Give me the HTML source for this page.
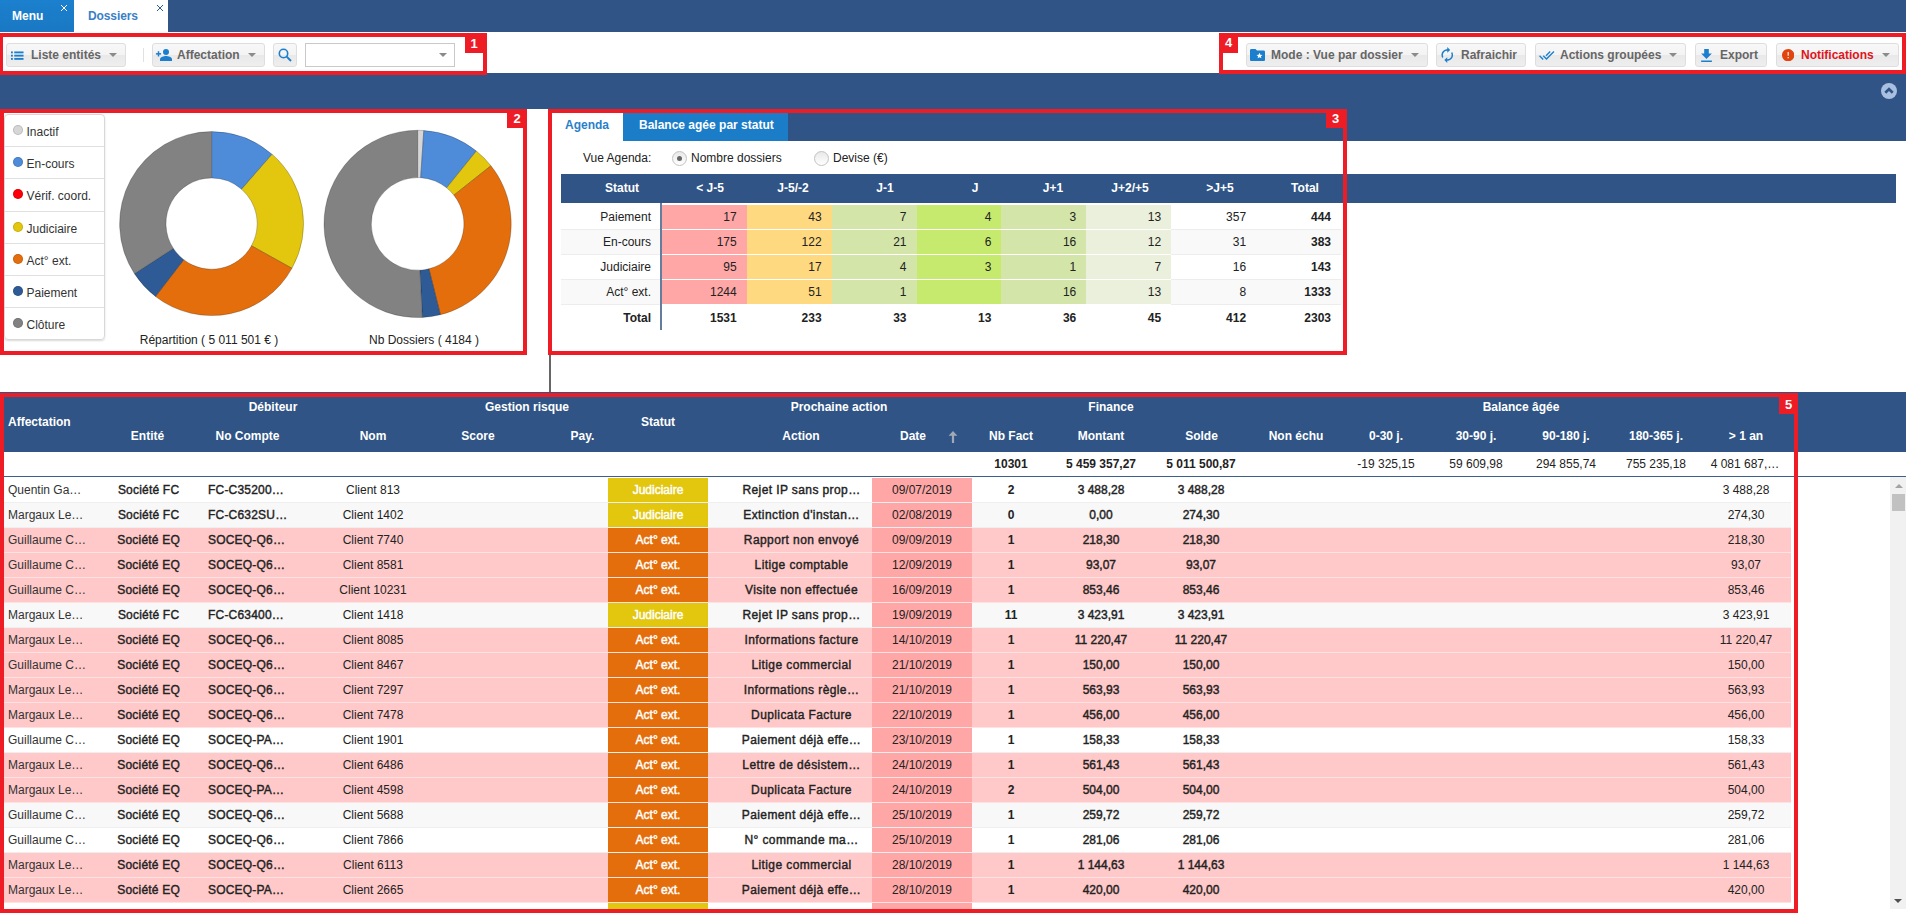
<!DOCTYPE html><html lang="fr"><head><meta charset="utf-8"><title>Dossiers</title><style>

html,body{margin:0;padding:0;}
body{width:1906px;height:913px;overflow:hidden;background:#fff;position:relative;
 font-family:"Liberation Sans",sans-serif;font-size:12px;color:#222;}
.a{position:absolute;}
.t{position:absolute;white-space:nowrap;line-height:14px;height:14px;}
.c{text-align:center;}
.r{text-align:right;}
.b{font-weight:bold;}
.m{-webkit-text-stroke:.4px currentColor;letter-spacing:.2px;}
.mn{-webkit-text-stroke:.42px currentColor;}
.ma{letter-spacing:.4px;}
.navy{background:#2f5485;}
.btn{position:absolute;top:43px;height:22px;border:1px solid #dedede;border-radius:3px;
 background:linear-gradient(#f8f8f8 0%,#f3f3f3 50%,#e9e9e9 51%,#eeeeee 100%);}
.btn .t{top:4px;font-weight:bold;color:#666;}
.arr{position:absolute;width:0;height:0;border-left:4px solid transparent;border-right:4px solid transparent;border-top:4px solid #8a8a8a;}
.rb{position:absolute;border:4px solid #ee1c25;box-sizing:border-box;}
.rl{position:absolute;background:#ee1c25;color:#fff;font-weight:bold;font-size:13px;text-align:center;}
.hd{color:#fff;font-weight:bold;}
.leg{position:absolute;left:4px;width:100px;height:32px;border-top:1px solid #e3e3e3;}
.dot{position:absolute;left:9px;width:10px;height:10px;border-radius:5px;}
.row{position:absolute;left:4px;width:1787px;height:24px;border-bottom:1px solid #ededed;}
.row .t{top:5px;}
.st{position:absolute;left:604px;width:100px;top:0;height:24px;color:#fff;-webkit-text-stroke:.45px #fff;text-align:center;line-height:25px;}
.dt{position:absolute;left:868px;width:100px;top:0;height:24px;background:#ffa7a7;text-align:center;line-height:25px;}
.ag{position:absolute;height:24px;line-height:24px;text-align:right;box-sizing:border-box;padding-right:10px;}

</style></head><body>
<div class="a navy" style="left:0;top:0;width:1906px;height:32px"></div>
<div class="a" style="left:0;top:0;width:74px;height:32px;background:linear-gradient(#1b80ce,#1a78c3)"></div>
<div class="t b" style="left:12px;top:9px;color:#fff">Menu</div>
<div class="a" style="left:74px;top:0;width:94px;height:32px;background:#fff"></div>
<div class="t" style="left:88px;top:9px;color:#3a80c6;font-weight:bold;letter-spacing:-.1px">Dossiers</div>
<svg class="a" style="left:60px;top:4px" width="8" height="8" viewBox="0 0 8 8"><path d="M1 1L7 7M7 1L1 7" stroke="#fff" stroke-width="1" fill="none"/></svg>
<svg class="a" style="left:156px;top:4px" width="8" height="8" viewBox="0 0 8 8"><path d="M1 1L7 7M7 1L1 7" stroke="#2f5f96" stroke-width="1" fill="none"/></svg>
<div class="a" style="left:0;top:32px;width:1906px;height:41px;background:#fff"></div>
<div class="a navy" style="left:0;top:73px;width:1906px;height:36px"></div>
<div class="a navy" style="left:788px;top:109px;width:1118px;height:32px"></div>
<div class="btn" style="left:6px;width:118px">
<svg class="a" style="left:4px;top:6.500px" width="13" height="9.300" viewBox="0 0 14 10" preserveAspectRatio="none"><g fill="#1b7fce"><rect x="0" y="0.5" width="2" height="2"/><rect x="3.5" y="0.5" width="10" height="2"/><rect x="0" y="4" width="2" height="2"/><rect x="3.5" y="4" width="10" height="2"/><rect x="0" y="7.5" width="2" height="2"/><rect x="3.5" y="7.5" width="10" height="2"/></g></svg>
<div class="t" style="left:24px;color:#666">Liste entités</div>
<div class="arr" style="left:102px;top:9px"></div>
</div>
<div class="a" style="left:143px;top:48px;width:1px;height:14px;background:#e1e1e1"></div>
<div class="btn" style="left:152px;width:111px">
<svg class="a" style="left:2px;top:4px" width="17" height="14" viewBox="0 0 17 14"><g fill="#1b7fce"><rect x="0.900" y="5.100" width="5.200" height="1.500"/><rect x="2.750" y="3.250" width="1.500" height="5.200"/><circle cx="11" cy="4" r="3"/><path d="M5 13v-1.6c0-2.2 4-3.3 6-3.3s6 1.100 6 3.300V13z"/></g></svg>
<div class="t" style="left:24px;color:#666">Affectation</div>
<div class="arr" style="left:95px;top:9px"></div>
</div>
<div class="btn" style="left:273px;width:22px">
<svg class="a" style="left:4px;top:4px" width="14" height="14" viewBox="0 0 14 14"><circle cx="5.500" cy="5.500" r="4.200" fill="none" stroke="#1b7fce" stroke-width="1.600"/><path d="M8.700 8.700L13 13" stroke="#1b7fce" stroke-width="1.900" fill="none"/></svg>
</div>
<div class="a" style="left:305px;top:43px;width:148px;height:22px;border:1px solid #c9c9c9;background:#fff"></div>
<div class="arr" style="left:439px;top:53px"></div>
<div class="btn" style="left:1246px;width:180px">
<svg class="a" style="left:3px;top:5px" width="15" height="12" viewBox="0 0 15 12"><path d="M1.300 0h4.200l1.500 1.600h6.700c.7 0 1.300.6 1.300 1.300v7.800c0 .7-.6 1.300-1.300 1.300H1.300C.6 12 0 11.400 0 10.700V1.300C0 .6.600 0 1.300 0z" fill="#1b7fce"/><path d="M9.500 3.800l.9 1.900 2.100.2-1.600 1.400.5 2-1.900-1.100-1.900 1.100.5-2L6.500 5.900l2.100-.2z" fill="#fff"/></svg>
<div class="t" style="left:24px;color:#666">Mode : Vue par dossier</div>
<div class="arr" style="left:164px;top:9px"></div>
</div>
<div class="btn" style="left:1436px;width:88px">
<svg class="a" style="left:4px;top:3px" width="12.500" height="16" viewBox="4 1 16 22"><path fill="#1b7fce" d="M12 6v3l4-4-4-4v3c-4.420 0-8 3.580-8 8 0 1.570.460 3.030 1.240 4.260L6.700 14.800c-.450-.830-.700-1.790-.700-2.800 0-3.310 2.690-6 6-6zm6.760 1.740L17.300 9.200c.440.840.700 1.790.700 2.800 0 3.310-2.690 6-6 6v-3l-4 4 4 4v-3c4.420 0 8-3.580 8-8 0-1.570-.460-3.030-1.240-4.260z"/></svg>
<div class="t" style="left:24px;color:#666">Rafraichir</div>
</div>
<div class="btn" style="left:1535px;width:149px">
<svg class="a" style="left:3px;top:6.500px" width="15.500" height="9" viewBox="0.400 5.500 23.300 13.600"><path fill="#1b7fce" d="M18 7l-1.410-1.410-6.340 6.340 1.410 1.410L18 7zm4.240-1.410L11.660 16.170 7.480 12l-1.410 1.410L11.660 19l12-12-1.420-1.410zM.410 13.410L6 19l1.410-1.410L1.830 12 .410 13.410z"/></svg>
<div class="t" style="left:24px;color:#666">Actions groupées</div>
<div class="arr" style="left:133px;top:9px"></div>
</div>
<div class="btn" style="left:1695px;width:70px">
<svg class="a" style="left:5px;top:4.500px" width="11" height="13" viewBox="5 3 14 17"><path fill="#1b7fce" d="M19 9h-4V3H9v6H5l7 7 7-7zM5 18v2h14v-2H5z"/></svg>
<div class="t" style="left:24px;color:#666">Export</div>
</div>
<div class="btn" style="left:1776px;width:121px">
<svg class="a" style="left:5px;top:5px" width="12.400" height="12.400" viewBox="2 2 20 20"><path fill="#e2440e" d="M12 2C6.480 2 2 6.480 2 12s4.480 10 10 10 10-4.480 10-10S17.520 2 12 2zm1 15h-2v-2h2v2zm0-4h-2V7h2v6z"/></svg>
<div class="t" style="left:24px;color:#e0141c">Notifications</div>
<div class="arr" style="left:105px;top:9px"></div>
</div>
<svg class="a" style="left:1881px;top:83px" width="16" height="16" viewBox="0 0 16 16"><circle cx="8" cy="8" r="8" fill="#a9c0e2"/><path d="M4.300 9.800L8 6.100l3.700 3.700" fill="none" stroke="#2f5485" stroke-width="2.700"/></svg>
<div class="a" style="left:4px;top:114px;width:101px;height:226px;border:1px solid #d8d8d8;border-radius:4px;box-shadow:0 1px 2px rgba(0,0,0,.15);box-sizing:border-box"></div>
<div class="a" style="left:13px;top:125.0px;width:10px;height:10px;border-radius:5px;background:#d6d6d6;box-shadow:inset 0 0 0 1px rgba(0,0,0,.12)"></div>
<div class="t" style="left:26.500px;top:125.0px;color:#333">Inactif</div>
<div class="a" style="left:5px;top:146.2px;width:99px;height:1px;background:#e0e0e0"></div>
<div class="a" style="left:13px;top:157.2px;width:10px;height:10px;border-radius:5px;background:#4e8bd9;box-shadow:inset 0 0 0 1px rgba(0,0,0,.12)"></div>
<div class="t" style="left:26.500px;top:157.2px;color:#333">En-cours</div>
<div class="a" style="left:5px;top:178.4px;width:99px;height:1px;background:#e0e0e0"></div>
<div class="a" style="left:13px;top:189.4px;width:10px;height:10px;border-radius:5px;background:#fb0007;box-shadow:inset 0 0 0 1px rgba(0,0,0,.12)"></div>
<div class="t" style="left:26.500px;top:189.4px;color:#333">Vérif. coord.</div>
<div class="a" style="left:5px;top:210.6px;width:99px;height:1px;background:#e0e0e0"></div>
<div class="a" style="left:13px;top:221.6px;width:10px;height:10px;border-radius:5px;background:#e3c60e;box-shadow:inset 0 0 0 1px rgba(0,0,0,.12)"></div>
<div class="t" style="left:26.500px;top:221.6px;color:#333">Judiciaire</div>
<div class="a" style="left:5px;top:242.8px;width:99px;height:1px;background:#e0e0e0"></div>
<div class="a" style="left:13px;top:253.8px;width:10px;height:10px;border-radius:5px;background:#e46e0b;box-shadow:inset 0 0 0 1px rgba(0,0,0,.12)"></div>
<div class="t" style="left:26.500px;top:253.8px;color:#333">Act° ext.</div>
<div class="a" style="left:5px;top:275.0px;width:99px;height:1px;background:#e0e0e0"></div>
<div class="a" style="left:13px;top:286.0px;width:10px;height:10px;border-radius:5px;background:#2e5b96;box-shadow:inset 0 0 0 1px rgba(0,0,0,.12)"></div>
<div class="t" style="left:26.500px;top:286.0px;color:#333">Paiement</div>
<div class="a" style="left:5px;top:307.2px;width:99px;height:1px;background:#e0e0e0"></div>
<div class="a" style="left:13px;top:318.2px;width:10px;height:10px;border-radius:5px;background:#828282;box-shadow:inset 0 0 0 1px rgba(0,0,0,.12)"></div>
<div class="t" style="left:26.500px;top:318.2px;color:#333">Clôture</div>
<svg class="a" style="left:0;top:0" width="530" height="360" viewBox="0 0 530 360"><path d="M211.60 131.60A92 92 0 0 1 272.08 154.27L241.58 189.24A45.6 45.6 0 0 0 211.60 178.00Z" fill="#4e8bd9" stroke="rgba(0,0,0,.28)" stroke-width="0.800"/><path d="M272.08 154.27A92 92 0 0 1 291.99 268.34L251.44 245.78A45.6 45.6 0 0 0 241.58 189.24Z" fill="#e3c60e" stroke="rgba(0,0,0,.28)" stroke-width="0.800"/><path d="M291.99 268.34A92 92 0 0 1 155.47 296.49L183.78 259.73A45.6 45.6 0 0 0 251.44 245.78Z" fill="#e46e0b" stroke="rgba(0,0,0,.28)" stroke-width="0.800"/><path d="M155.47 296.49A92 92 0 0 1 134.44 273.71L173.36 248.44A45.6 45.6 0 0 0 183.78 259.73Z" fill="#2e5b96" stroke="rgba(0,0,0,.28)" stroke-width="0.800"/><path d="M134.44 273.71A92 92 0 0 1 211.60 131.60L211.60 178.00A45.6 45.6 0 0 0 173.36 248.44Z" fill="#828282" stroke="rgba(0,0,0,.28)" stroke-width="0.800"/></svg>
<svg class="a" style="left:0;top:0" width="530" height="360" viewBox="0 0 530 360"><path d="M417.60 130.30A93.6 93.6 0 0 1 423.80 130.51L420.67 177.70A46.3 46.3 0 0 0 417.60 177.60Z" fill="#d6d6d6" stroke="rgba(0,0,0,.28)" stroke-width="0.800"/><path d="M423.80 130.51A93.6 93.6 0 0 1 476.38 151.06L446.67 187.87A46.3 46.3 0 0 0 420.67 177.70Z" fill="#4e8bd9" stroke="rgba(0,0,0,.28)" stroke-width="0.800"/><path d="M476.38 151.06A93.6 93.6 0 0 1 490.95 165.76L453.89 195.14A46.3 46.3 0 0 0 446.67 187.87Z" fill="#e3c60e" stroke="rgba(0,0,0,.28)" stroke-width="0.800"/><path d="M490.95 165.76A93.6 93.6 0 0 1 440.40 314.68L428.88 268.81A46.3 46.3 0 0 0 453.89 195.14Z" fill="#e46e0b" stroke="rgba(0,0,0,.28)" stroke-width="0.800"/><path d="M440.40 314.68A93.6 93.6 0 0 1 422.34 317.38L419.94 270.14A46.3 46.3 0 0 0 428.88 268.81Z" fill="#2e5b96" stroke="rgba(0,0,0,.28)" stroke-width="0.800"/><path d="M422.34 317.38A93.6 93.6 0 1 1 417.60 130.30L417.60 177.60A46.3 46.3 0 1 0 419.94 270.14Z" fill="#828282" stroke="rgba(0,0,0,.28)" stroke-width="0.800"/></svg>
<div class="t c" style="left:109px;width:200px;top:333px">Répartition ( 5 011 501 € )</div>
<div class="t c" style="left:324px;width:200px;top:333px">Nb Dossiers ( 4184 )</div>
<div class="a" style="left:552px;top:113px;width:71px;height:28px;background:#fff"></div>
<div class="a" style="left:623px;top:113px;width:165px;height:28px;background:#1b7cc8"></div>
<div class="t b" style="left:565px;top:118px;color:#2a7fc9">Agenda</div>
<div class="t b" style="left:639px;top:118px;color:#fff">Balance agée par statut</div>
<div class="t" style="left:583px;top:151px">Vue Agenda:</div>
<div class="a" style="left:672px;top:151px;width:13px;height:13px;border:1px solid #c2c2c2;border-radius:8px;background:linear-gradient(#e8e8e8,#fff)"></div>
<div class="a" style="left:676.5px;top:155.5px;width:5px;height:5px;border-radius:3px;background:#666"></div>
<div class="t" style="left:691px;top:151px">Nombre dossiers</div>
<div class="a" style="left:814px;top:151px;width:13px;height:13px;border:1px solid #c2c2c2;border-radius:8px;background:linear-gradient(#e8e8e8,#fff)"></div>
<div class="t" style="left:833px;top:151px">Devise (€)</div>
<div class="a navy" style="left:561px;top:174px;width:1335px;height:29px"></div>
<div class="t c hd" style="left:572px;width:100px;top:181px">Statut</div>
<div class="t c hd" style="left:660px;width:100px;top:181px">&lt; J-5</div>
<div class="t c hd" style="left:743px;width:100px;top:181px">J-5/-2</div>
<div class="t c hd" style="left:835px;width:100px;top:181px">J-1</div>
<div class="t c hd" style="left:925px;width:100px;top:181px">J</div>
<div class="t c hd" style="left:1003px;width:100px;top:181px">J+1</div>
<div class="t c hd" style="left:1080px;width:100px;top:181px">J+2/+5</div>
<div class="t c hd" style="left:1170px;width:100px;top:181px">&gt;J+5</div>
<div class="t c hd" style="left:1255px;width:100px;top:181px">Total</div>
<div class="ag" style="left:561px;width:100px;top:205px;background:#fff;border-bottom:0">Paiement</div>
<div class="ag" style="left:661.8px;width:85.900px;padding-right:11px;top:205px;background:#ffa7a7">17</div>
<div class="ag" style="left:746.7px;width:85.900px;padding-right:11px;top:205px;background:#ffd97f">43</div>
<div class="ag" style="left:831.6px;width:85.900px;padding-right:11px;top:205px;background:#d3e5a9">7</div>
<div class="ag" style="left:916.5px;width:85.900px;padding-right:11px;top:205px;background:#c6ea6e">4</div>
<div class="ag" style="left:1001.4px;width:85.900px;padding-right:11px;top:205px;background:#d3e5a9">3</div>
<div class="ag" style="left:1086.3px;width:85.900px;padding-right:11px;top:205px;background:#ebf0dc">13</div>
<div class="ag" style="left:1171.2px;width:85.900px;padding-right:11px;top:205px;background:#fff">357</div>
<div class="ag" style="left:1256.1px;width:85.900px;padding-right:11px;top:205px;background:#fff;font-weight:bold">444</div>
<div class="a" style="left:561px;top:229px;width:100px;height:1px;background:#ededed"></div>
<div class="a" style="left:1171px;top:229px;width:170px;height:1px;background:#ededed"></div>
<div class="ag" style="left:561px;width:100px;top:230px;background:#f9f9f9;border-bottom:0">En-cours</div>
<div class="ag" style="left:661.8px;width:85.900px;padding-right:11px;top:230px;background:#ffa7a7">175</div>
<div class="ag" style="left:746.7px;width:85.900px;padding-right:11px;top:230px;background:#ffd97f">122</div>
<div class="ag" style="left:831.6px;width:85.900px;padding-right:11px;top:230px;background:#d3e5a9">21</div>
<div class="ag" style="left:916.5px;width:85.900px;padding-right:11px;top:230px;background:#c6ea6e">6</div>
<div class="ag" style="left:1001.4px;width:85.900px;padding-right:11px;top:230px;background:#d3e5a9">16</div>
<div class="ag" style="left:1086.3px;width:85.900px;padding-right:11px;top:230px;background:#ebf0dc">12</div>
<div class="ag" style="left:1171.2px;width:85.900px;padding-right:11px;top:230px;background:#f9f9f9">31</div>
<div class="ag" style="left:1256.1px;width:85.900px;padding-right:11px;top:230px;background:#f9f9f9;font-weight:bold">383</div>
<div class="a" style="left:561px;top:254px;width:100px;height:1px;background:#ededed"></div>
<div class="a" style="left:1171px;top:254px;width:170px;height:1px;background:#ededed"></div>
<div class="ag" style="left:561px;width:100px;top:255px;background:#fff;border-bottom:0">Judiciaire</div>
<div class="ag" style="left:661.8px;width:85.900px;padding-right:11px;top:255px;background:#ffa7a7">95</div>
<div class="ag" style="left:746.7px;width:85.900px;padding-right:11px;top:255px;background:#ffd97f">17</div>
<div class="ag" style="left:831.6px;width:85.900px;padding-right:11px;top:255px;background:#d3e5a9">4</div>
<div class="ag" style="left:916.5px;width:85.900px;padding-right:11px;top:255px;background:#c6ea6e">3</div>
<div class="ag" style="left:1001.4px;width:85.900px;padding-right:11px;top:255px;background:#d3e5a9">1</div>
<div class="ag" style="left:1086.3px;width:85.900px;padding-right:11px;top:255px;background:#ebf0dc">7</div>
<div class="ag" style="left:1171.2px;width:85.900px;padding-right:11px;top:255px;background:#fff">16</div>
<div class="ag" style="left:1256.1px;width:85.900px;padding-right:11px;top:255px;background:#fff;font-weight:bold">143</div>
<div class="a" style="left:561px;top:279px;width:100px;height:1px;background:#ededed"></div>
<div class="a" style="left:1171px;top:279px;width:170px;height:1px;background:#ededed"></div>
<div class="ag" style="left:561px;width:100px;top:280px;background:#f9f9f9;border-bottom:0">Act° ext.</div>
<div class="ag" style="left:661.8px;width:85.900px;padding-right:11px;top:280px;background:#ffa7a7">1244</div>
<div class="ag" style="left:746.7px;width:85.900px;padding-right:11px;top:280px;background:#ffd97f">51</div>
<div class="ag" style="left:831.6px;width:85.900px;padding-right:11px;top:280px;background:#d3e5a9">1</div>
<div class="ag" style="left:916.5px;width:85.900px;padding-right:11px;top:280px;background:#c6ea6e"></div>
<div class="ag" style="left:1001.4px;width:85.900px;padding-right:11px;top:280px;background:#d3e5a9">16</div>
<div class="ag" style="left:1086.3px;width:85.900px;padding-right:11px;top:280px;background:#ebf0dc">13</div>
<div class="ag" style="left:1171.2px;width:85.900px;padding-right:11px;top:280px;background:#f9f9f9">8</div>
<div class="ag" style="left:1256.1px;width:85.900px;padding-right:11px;top:280px;background:#f9f9f9;font-weight:bold">1333</div>
<div class="a" style="left:561px;top:304px;width:100px;height:1px;background:#ededed"></div>
<div class="a" style="left:1171px;top:304px;width:170px;height:1px;background:#ededed"></div>
<div class="ag b" style="left:561px;width:100px;top:306px">Total</div>
<div class="ag b" style="left:661.8px;width:85.900px;padding-right:11px;top:306px">1531</div>
<div class="ag b" style="left:746.7px;width:85.900px;padding-right:11px;top:306px">233</div>
<div class="ag b" style="left:831.6px;width:85.900px;padding-right:11px;top:306px">33</div>
<div class="ag b" style="left:916.5px;width:85.900px;padding-right:11px;top:306px">13</div>
<div class="ag b" style="left:1001.4px;width:85.900px;padding-right:11px;top:306px">36</div>
<div class="ag b" style="left:1086.3px;width:85.900px;padding-right:11px;top:306px">45</div>
<div class="ag b" style="left:1171.2px;width:85.900px;padding-right:11px;top:306px">412</div>
<div class="ag b" style="left:1256.1px;width:85.900px;padding-right:11px;top:306px">2303</div>
<div class="a" style="left:660px;top:203px;width:2px;height:127px;background:#647c9e"></div>
<div class="a" style="left:549px;top:355px;width:2px;height:37px;background:#666"></div>
<div class="a navy" style="left:0;top:392px;width:1906px;height:60px"></div>
<div class="t hd" style="left:8px;top:415px">Affectation</div>
<div class="t c hd" style="left:213px;width:120px;top:400px">Débiteur</div>
<div class="t c hd" style="left:467px;width:120px;top:400px">Gestion risque</div>
<div class="t c hd" style="left:779px;width:120px;top:400px">Prochaine action</div>
<div class="t c hd" style="left:1051px;width:120px;top:400px">Finance</div>
<div class="t c hd" style="left:1461px;width:120px;top:400px">Balance âgée</div>
<div class="t c hd" style="left:598px;width:120px;top:415px">Statut</div>
<div class="t c hd" style="left:87.5px;width:120px;top:429px">Entité</div>
<div class="t c hd" style="left:187.5px;width:120px;top:429px">No Compte</div>
<div class="t c hd" style="left:313px;width:120px;top:429px">Nom</div>
<div class="t c hd" style="left:418px;width:120px;top:429px">Score</div>
<div class="t c hd" style="left:522.5px;width:120px;top:429px">Pay.</div>
<div class="t c hd" style="left:741px;width:120px;top:429px">Action</div>
<div class="t c hd" style="left:853px;width:120px;top:429px">Date</div>
<div class="t c hd" style="left:951px;width:120px;top:429px">Nb Fact</div>
<div class="t c hd" style="left:1041px;width:120px;top:429px">Montant</div>
<div class="t c hd" style="left:1141.5px;width:120px;top:429px">Solde</div>
<div class="t c hd" style="left:1236px;width:120px;top:429px">Non échu</div>
<div class="t c hd" style="left:1326px;width:120px;top:429px">0-30 j.</div>
<div class="t c hd" style="left:1416px;width:120px;top:429px">30-90 j.</div>
<div class="t c hd" style="left:1506px;width:120px;top:429px">90-180 j.</div>
<div class="t c hd" style="left:1596px;width:120px;top:429px">180-365 j.</div>
<div class="t c hd" style="left:1686px;width:120px;top:429px">&gt; 1 an</div>
<svg class="a" style="left:948.400px;top:430.500px" width="10" height="12" viewBox="0 0 10 12"><path d="M5 0L9.400 4.800H6.100V12H3.900V4.800H0.600z" fill="#a2a9b4"/></svg>
<div class="t c b" style="left:951.0px;width:120px;top:457px">10301</div>
<div class="t c b" style="left:1041.0px;width:120px;top:457px">5 459 357,27</div>
<div class="t c b" style="left:1141.0px;width:120px;top:457px">5 011 500,87</div>
<div class="t c " style="left:1326.0px;width:120px;top:457px">-19 325,15</div>
<div class="t c " style="left:1416.0px;width:120px;top:457px">59 609,98</div>
<div class="t c " style="left:1506.0px;width:120px;top:457px">294 855,74</div>
<div class="t c " style="left:1596.0px;width:120px;top:457px">755 235,18</div>
<div class="t c " style="left:1685.0px;width:120px;top:457px">4 081 687,…</div>
<div class="a" style="left:0;top:476px;width:1906px;height:1px;background:#3d5f8c"></div>
<div class="row" style="top:478px;background:#fff;border-bottom-color:#efefef">
<div class="t" style="left:4px;color:#333">Quentin Ga…</div>
<div class="t c m" style="left:84.6px;width:120px">Société FC</div>
<div class="t m" style="left:204px">FC-C35200…</div>
<div class="t c " style="left:309.0px;width:120px">Client 813</div>
<div class="st" style="background:#e3c60e">Judiciaire</div>
<div class="t c m ma" style="left:737.5px;width:120px">Rejet IP sans prop…</div>
<div class="dt">09/07/2019</div>
<div class="t c b" style="left:947.0px;width:120px">2</div>
<div class="t c mn" style="left:1037.0px;width:120px">3 488,28</div>
<div class="t c mn" style="left:1137.0px;width:120px">3 488,28</div>
<div class="t c " style="left:1682.0px;width:120px">3 488,28</div>
</div>
<div class="row" style="top:503px;background:#f8f8f8;border-bottom-color:#efefef">
<div class="t" style="left:4px;color:#333">Margaux Le…</div>
<div class="t c m" style="left:84.6px;width:120px">Société FC</div>
<div class="t m" style="left:204px">FC-C632SU…</div>
<div class="t c " style="left:309.0px;width:120px">Client 1402</div>
<div class="st" style="background:#e3c60e">Judiciaire</div>
<div class="t c m ma" style="left:737.5px;width:120px">Extinction d'instan…</div>
<div class="dt">02/08/2019</div>
<div class="t c b" style="left:947.0px;width:120px">0</div>
<div class="t c mn" style="left:1037.0px;width:120px">0,00</div>
<div class="t c mn" style="left:1137.0px;width:120px">274,30</div>
<div class="t c " style="left:1682.0px;width:120px">274,30</div>
</div>
<div class="row" style="top:528px;background:#ffc9c9;border-bottom-color:#ffe1e1">
<div class="t" style="left:4px;color:#333">Guillaume C…</div>
<div class="t c m" style="left:84.6px;width:120px">Société EQ</div>
<div class="t m" style="left:204px">SOCEQ-Q6…</div>
<div class="t c " style="left:309.0px;width:120px">Client 7740</div>
<div class="st" style="background:#e46e0b">Act° ext.</div>
<div class="t c m ma" style="left:737.5px;width:120px">Rapport non envoyé</div>
<div class="dt">09/09/2019</div>
<div class="t c b" style="left:947.0px;width:120px">1</div>
<div class="t c mn" style="left:1037.0px;width:120px">218,30</div>
<div class="t c mn" style="left:1137.0px;width:120px">218,30</div>
<div class="t c " style="left:1682.0px;width:120px">218,30</div>
</div>
<div class="row" style="top:553px;background:#ffc9c9;border-bottom-color:#ffe1e1">
<div class="t" style="left:4px;color:#333">Guillaume C…</div>
<div class="t c m" style="left:84.6px;width:120px">Société EQ</div>
<div class="t m" style="left:204px">SOCEQ-Q6…</div>
<div class="t c " style="left:309.0px;width:120px">Client 8581</div>
<div class="st" style="background:#e46e0b">Act° ext.</div>
<div class="t c m ma" style="left:737.5px;width:120px">Litige comptable</div>
<div class="dt">12/09/2019</div>
<div class="t c b" style="left:947.0px;width:120px">1</div>
<div class="t c mn" style="left:1037.0px;width:120px">93,07</div>
<div class="t c mn" style="left:1137.0px;width:120px">93,07</div>
<div class="t c " style="left:1682.0px;width:120px">93,07</div>
</div>
<div class="row" style="top:578px;background:#ffc9c9;border-bottom-color:#ffe1e1">
<div class="t" style="left:4px;color:#333">Guillaume C…</div>
<div class="t c m" style="left:84.6px;width:120px">Société EQ</div>
<div class="t m" style="left:204px">SOCEQ-Q6…</div>
<div class="t c " style="left:309.0px;width:120px">Client 10231</div>
<div class="st" style="background:#e46e0b">Act° ext.</div>
<div class="t c m ma" style="left:737.5px;width:120px">Visite non effectuée</div>
<div class="dt">16/09/2019</div>
<div class="t c b" style="left:947.0px;width:120px">1</div>
<div class="t c mn" style="left:1037.0px;width:120px">853,46</div>
<div class="t c mn" style="left:1137.0px;width:120px">853,46</div>
<div class="t c " style="left:1682.0px;width:120px">853,46</div>
</div>
<div class="row" style="top:603px;background:#f8f8f8;border-bottom-color:#efefef">
<div class="t" style="left:4px;color:#333">Margaux Le…</div>
<div class="t c m" style="left:84.6px;width:120px">Société FC</div>
<div class="t m" style="left:204px">FC-C63400…</div>
<div class="t c " style="left:309.0px;width:120px">Client 1418</div>
<div class="st" style="background:#e3c60e">Judiciaire</div>
<div class="t c m ma" style="left:737.5px;width:120px">Rejet IP sans prop…</div>
<div class="dt">19/09/2019</div>
<div class="t c b" style="left:947.0px;width:120px">11</div>
<div class="t c mn" style="left:1037.0px;width:120px">3 423,91</div>
<div class="t c mn" style="left:1137.0px;width:120px">3 423,91</div>
<div class="t c " style="left:1682.0px;width:120px">3 423,91</div>
</div>
<div class="row" style="top:628px;background:#ffc9c9;border-bottom-color:#ffe1e1">
<div class="t" style="left:4px;color:#333">Margaux Le…</div>
<div class="t c m" style="left:84.6px;width:120px">Société EQ</div>
<div class="t m" style="left:204px">SOCEQ-Q6…</div>
<div class="t c " style="left:309.0px;width:120px">Client 8085</div>
<div class="st" style="background:#e46e0b">Act° ext.</div>
<div class="t c m ma" style="left:737.5px;width:120px">Informations facture</div>
<div class="dt">14/10/2019</div>
<div class="t c b" style="left:947.0px;width:120px">1</div>
<div class="t c mn" style="left:1037.0px;width:120px">11 220,47</div>
<div class="t c mn" style="left:1137.0px;width:120px">11 220,47</div>
<div class="t c " style="left:1682.0px;width:120px">11 220,47</div>
</div>
<div class="row" style="top:653px;background:#ffc9c9;border-bottom-color:#ffe1e1">
<div class="t" style="left:4px;color:#333">Guillaume C…</div>
<div class="t c m" style="left:84.6px;width:120px">Société EQ</div>
<div class="t m" style="left:204px">SOCEQ-Q6…</div>
<div class="t c " style="left:309.0px;width:120px">Client 8467</div>
<div class="st" style="background:#e46e0b">Act° ext.</div>
<div class="t c m ma" style="left:737.5px;width:120px">Litige commercial</div>
<div class="dt">21/10/2019</div>
<div class="t c b" style="left:947.0px;width:120px">1</div>
<div class="t c mn" style="left:1037.0px;width:120px">150,00</div>
<div class="t c mn" style="left:1137.0px;width:120px">150,00</div>
<div class="t c " style="left:1682.0px;width:120px">150,00</div>
</div>
<div class="row" style="top:678px;background:#ffc9c9;border-bottom-color:#ffe1e1">
<div class="t" style="left:4px;color:#333">Margaux Le…</div>
<div class="t c m" style="left:84.6px;width:120px">Société EQ</div>
<div class="t m" style="left:204px">SOCEQ-Q6…</div>
<div class="t c " style="left:309.0px;width:120px">Client 7297</div>
<div class="st" style="background:#e46e0b">Act° ext.</div>
<div class="t c m ma" style="left:737.5px;width:120px">Informations règle…</div>
<div class="dt">21/10/2019</div>
<div class="t c b" style="left:947.0px;width:120px">1</div>
<div class="t c mn" style="left:1037.0px;width:120px">563,93</div>
<div class="t c mn" style="left:1137.0px;width:120px">563,93</div>
<div class="t c " style="left:1682.0px;width:120px">563,93</div>
</div>
<div class="row" style="top:703px;background:#ffc9c9;border-bottom-color:#ffe1e1">
<div class="t" style="left:4px;color:#333">Margaux Le…</div>
<div class="t c m" style="left:84.6px;width:120px">Société EQ</div>
<div class="t m" style="left:204px">SOCEQ-Q6…</div>
<div class="t c " style="left:309.0px;width:120px">Client 7478</div>
<div class="st" style="background:#e46e0b">Act° ext.</div>
<div class="t c m ma" style="left:737.5px;width:120px">Duplicata Facture</div>
<div class="dt">22/10/2019</div>
<div class="t c b" style="left:947.0px;width:120px">1</div>
<div class="t c mn" style="left:1037.0px;width:120px">456,00</div>
<div class="t c mn" style="left:1137.0px;width:120px">456,00</div>
<div class="t c " style="left:1682.0px;width:120px">456,00</div>
</div>
<div class="row" style="top:728px;background:#fff;border-bottom-color:#efefef">
<div class="t" style="left:4px;color:#333">Guillaume C…</div>
<div class="t c m" style="left:84.6px;width:120px">Société EQ</div>
<div class="t m" style="left:204px">SOCEQ-PA…</div>
<div class="t c " style="left:309.0px;width:120px">Client 1901</div>
<div class="st" style="background:#e46e0b">Act° ext.</div>
<div class="t c m ma" style="left:737.5px;width:120px">Paiement déjà effe…</div>
<div class="dt">23/10/2019</div>
<div class="t c b" style="left:947.0px;width:120px">1</div>
<div class="t c mn" style="left:1037.0px;width:120px">158,33</div>
<div class="t c mn" style="left:1137.0px;width:120px">158,33</div>
<div class="t c " style="left:1682.0px;width:120px">158,33</div>
</div>
<div class="row" style="top:753px;background:#ffc9c9;border-bottom-color:#ffe1e1">
<div class="t" style="left:4px;color:#333">Margaux Le…</div>
<div class="t c m" style="left:84.6px;width:120px">Société EQ</div>
<div class="t m" style="left:204px">SOCEQ-Q6…</div>
<div class="t c " style="left:309.0px;width:120px">Client 6486</div>
<div class="st" style="background:#e46e0b">Act° ext.</div>
<div class="t c m ma" style="left:737.5px;width:120px">Lettre de désistem…</div>
<div class="dt">24/10/2019</div>
<div class="t c b" style="left:947.0px;width:120px">1</div>
<div class="t c mn" style="left:1037.0px;width:120px">561,43</div>
<div class="t c mn" style="left:1137.0px;width:120px">561,43</div>
<div class="t c " style="left:1682.0px;width:120px">561,43</div>
</div>
<div class="row" style="top:778px;background:#ffc9c9;border-bottom-color:#ffe1e1">
<div class="t" style="left:4px;color:#333">Margaux Le…</div>
<div class="t c m" style="left:84.6px;width:120px">Société EQ</div>
<div class="t m" style="left:204px">SOCEQ-PA…</div>
<div class="t c " style="left:309.0px;width:120px">Client 4598</div>
<div class="st" style="background:#e46e0b">Act° ext.</div>
<div class="t c m ma" style="left:737.5px;width:120px">Duplicata Facture</div>
<div class="dt">24/10/2019</div>
<div class="t c b" style="left:947.0px;width:120px">2</div>
<div class="t c mn" style="left:1037.0px;width:120px">504,00</div>
<div class="t c mn" style="left:1137.0px;width:120px">504,00</div>
<div class="t c " style="left:1682.0px;width:120px">504,00</div>
</div>
<div class="row" style="top:803px;background:#f8f8f8;border-bottom-color:#efefef">
<div class="t" style="left:4px;color:#333">Guillaume C…</div>
<div class="t c m" style="left:84.6px;width:120px">Société EQ</div>
<div class="t m" style="left:204px">SOCEQ-Q6…</div>
<div class="t c " style="left:309.0px;width:120px">Client 5688</div>
<div class="st" style="background:#e46e0b">Act° ext.</div>
<div class="t c m ma" style="left:737.5px;width:120px">Paiement déjà effe…</div>
<div class="dt">25/10/2019</div>
<div class="t c b" style="left:947.0px;width:120px">1</div>
<div class="t c mn" style="left:1037.0px;width:120px">259,72</div>
<div class="t c mn" style="left:1137.0px;width:120px">259,72</div>
<div class="t c " style="left:1682.0px;width:120px">259,72</div>
</div>
<div class="row" style="top:828px;background:#fff;border-bottom-color:#efefef">
<div class="t" style="left:4px;color:#333">Guillaume C…</div>
<div class="t c m" style="left:84.6px;width:120px">Société EQ</div>
<div class="t m" style="left:204px">SOCEQ-Q6…</div>
<div class="t c " style="left:309.0px;width:120px">Client 7866</div>
<div class="st" style="background:#e46e0b">Act° ext.</div>
<div class="t c m ma" style="left:737.5px;width:120px">N° commande ma…</div>
<div class="dt">25/10/2019</div>
<div class="t c b" style="left:947.0px;width:120px">1</div>
<div class="t c mn" style="left:1037.0px;width:120px">281,06</div>
<div class="t c mn" style="left:1137.0px;width:120px">281,06</div>
<div class="t c " style="left:1682.0px;width:120px">281,06</div>
</div>
<div class="row" style="top:853px;background:#ffc9c9;border-bottom-color:#ffe1e1">
<div class="t" style="left:4px;color:#333">Margaux Le…</div>
<div class="t c m" style="left:84.6px;width:120px">Société EQ</div>
<div class="t m" style="left:204px">SOCEQ-Q6…</div>
<div class="t c " style="left:309.0px;width:120px">Client 6113</div>
<div class="st" style="background:#e46e0b">Act° ext.</div>
<div class="t c m ma" style="left:737.5px;width:120px">Litige commercial</div>
<div class="dt">28/10/2019</div>
<div class="t c b" style="left:947.0px;width:120px">1</div>
<div class="t c mn" style="left:1037.0px;width:120px">1 144,63</div>
<div class="t c mn" style="left:1137.0px;width:120px">1 144,63</div>
<div class="t c " style="left:1682.0px;width:120px">1 144,63</div>
</div>
<div class="row" style="top:878px;background:#ffc9c9;border-bottom-color:#ffe1e1">
<div class="t" style="left:4px;color:#333">Margaux Le…</div>
<div class="t c m" style="left:84.6px;width:120px">Société EQ</div>
<div class="t m" style="left:204px">SOCEQ-PA…</div>
<div class="t c " style="left:309.0px;width:120px">Client 2665</div>
<div class="st" style="background:#e46e0b">Act° ext.</div>
<div class="t c m ma" style="left:737.5px;width:120px">Paiement déjà effe…</div>
<div class="dt">28/10/2019</div>
<div class="t c b" style="left:947.0px;width:120px">1</div>
<div class="t c mn" style="left:1037.0px;width:120px">420,00</div>
<div class="t c mn" style="left:1137.0px;width:120px">420,00</div>
<div class="t c " style="left:1682.0px;width:120px">420,00</div>
</div>
<div class="row" style="top:903px;background:#fff;border-bottom-color:#efefef">
<div class="t" style="left:4px;color:#333"></div>
<div class="t c m" style="left:84.6px;width:120px"></div>
<div class="t m" style="left:204px"></div>
<div class="t c " style="left:309.0px;width:120px"></div>
<div class="st" style="background:#e3c60e">Judiciaire</div>
<div class="t c m ma" style="left:737.5px;width:120px"></div>
<div class="dt"></div>
<div class="t c b" style="left:947.0px;width:120px"></div>
<div class="t c mn" style="left:1037.0px;width:120px"></div>
<div class="t c mn" style="left:1137.0px;width:120px"></div>
<div class="t c " style="left:1682.0px;width:120px"></div>
</div>
<div class="a" style="left:1890px;top:477px;width:16px;height:432px;background:#f1f1f1"></div>
<div class="a" style="left:1892px;top:494px;width:13px;height:17px;background:#c1c1c1"></div>
<div class="a" style="left:1894.5px;top:484px;width:0;height:0;border-left:4px solid transparent;border-right:4px solid transparent;border-bottom:4px solid #a3a3a3"></div>
<div class="a" style="left:1894px;top:899px;width:0;height:0;border-left:4px solid transparent;border-right:4px solid transparent;border-top:4px solid #505050"></div>
<div class="rb" style="left:-1px;top:33px;width:488px;height:42px"></div>
<div class="rl" style="left:465px;top:33px;width:22px;height:20px;line-height:20px"><span style="position:relative;left:-2px;top:1px">1</span></div>
<div class="rb" style="left:1219px;top:33px;width:687px;height:41px"></div>
<div class="rl" style="left:1219px;top:33px;width:19px;height:20px;line-height:20px"><span style="position:relative;left:0px;top:0px">4</span></div>
<div class="rb" style="left:0px;top:109px;width:527px;height:246px"></div>
<div class="rl" style="left:507px;top:109px;width:20px;height:19px;line-height:19px"><span style="position:relative;left:0px;top:0px">2</span></div>
<div class="rb" style="left:548px;top:109px;width:799px;height:246px"></div>
<div class="rl" style="left:1326px;top:109px;width:21px;height:19px;line-height:19px"><span style="position:relative;left:-1px;top:0px">3</span></div>
<div class="rb" style="left:0px;top:393px;width:1798px;height:520px"></div>
<div class="rl" style="left:1779px;top:393px;width:19px;height:21px;line-height:21px"><span style="position:relative;left:0px;top:0.5px">5</span></div>
</body></html>
